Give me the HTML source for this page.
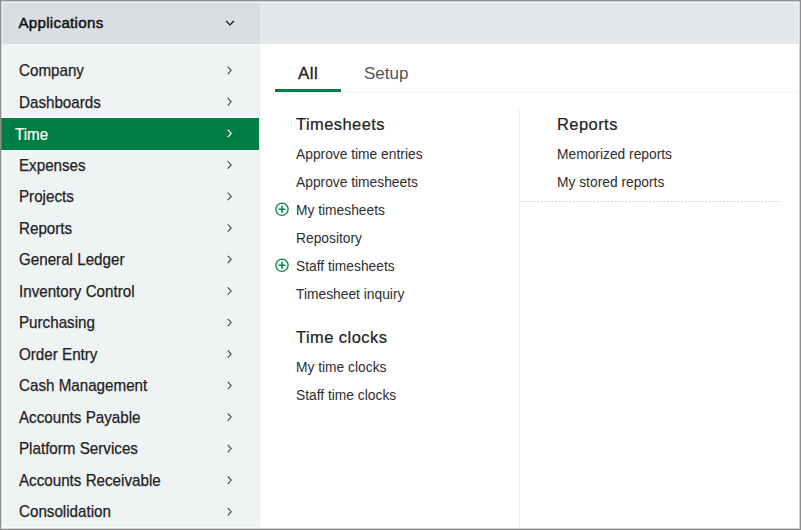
<!DOCTYPE html>
<html>
<head>
<meta charset="utf-8">
<style>
html,body{margin:0;padding:0;width:801px;height:530px;overflow:hidden;background:#fff;}
body{position:relative;font-family:"Liberation Sans",sans-serif;}
.a{position:absolute;white-space:nowrap;}
#frame{position:absolute;left:0;top:0;width:801px;height:530px;box-sizing:border-box;border:1px solid #8e8e8e;}
#frame2{position:absolute;left:1px;top:1px;width:799px;height:528px;box-sizing:border-box;border:1px solid rgba(142,142,142,0.4);}
#hdrL{position:absolute;left:2px;top:2px;width:258px;height:42px;box-sizing:border-box;border-top:1px solid #e9eef0;border-left:1px solid #e9eef0;background:#d8dee1;}
#hdrR{position:absolute;left:260px;top:2px;width:539px;height:42px;box-sizing:border-box;border-top:1px solid #eff2f4;border-right:1px solid #eff2f4;background:#e4e8eb;}
#side{position:absolute;left:2px;top:44px;width:258px;height:484px;box-sizing:border-box;border-left:1px solid #fbfcfc;border-bottom:1px solid #fbfcfc;border-right:1px solid #e8eced;background:#eff3f4;}
.row{position:absolute;left:0px;width:256px;height:31.5px;line-height:31.5px;font-size:15.2px;color:#222;}
.row span{position:absolute;left:15.5px;top:0px;-webkit-text-stroke:0.25px currentColor;font-size:15.9px;transform:scaleX(0.955);transform-origin:0 50%;}
.row.sel{background:#007d44;color:#fff;box-shadow:0 -1px 0 #fafcfc,0 1px 0 #fafcfc;}
.row.sel span{left:14px;top:0.6px;-webkit-text-stroke:0.2px #fff;}
.chev{position:absolute;left:223px;top:11px;width:8px;height:8px;}
.tab{font-size:17px;line-height:17px;}
.h{font-size:15.9px;line-height:16px;color:#222;letter-spacing:0.45px;transform:scaleX(1.035);transform-origin:0 0;-webkit-text-stroke:0.2px #222;}
.it{font-size:13.8px;line-height:14px;color:#2e2e2e;}
</style>
</head>
<body>
<div id="hdrL"></div>
<div id="hdrR"></div>
<div class="a" style="left:18.4px;top:13.7px;font-size:15.2px;line-height:18px;letter-spacing:0.27px;color:#111;-webkit-text-stroke:0.45px #111;">Applications</div>
<svg class="a" style="left:224px;top:18px" width="12" height="10" viewBox="0 0 12 10"><path d="M2.1 3.1 L6 6.9 L9.9 3.1" fill="none" stroke="#1a1a1a" stroke-width="1.35"/></svg>

<div id="side">
  <div class="row" style="top:11px"><span>Company</span></div>
  <div class="row" style="top:42.5px"><span>Dashboards</span></div>
  <div class="row sel" style="top:74px;left:-2px;width:258px"><span>Time</span></div>
  <div class="row" style="top:105.5px"><span>Expenses</span></div>
  <div class="row" style="top:137px"><span>Projects</span></div>
  <div class="row" style="top:168.5px"><span>Reports</span></div>
  <div class="row" style="top:200px"><span>General Ledger</span></div>
  <div class="row" style="top:231.5px"><span>Inventory Control</span></div>
  <div class="row" style="top:263px"><span>Purchasing</span></div>
  <div class="row" style="top:294.5px"><span>Order Entry</span></div>
  <div class="row" style="top:326px"><span>Cash Management</span></div>
  <div class="row" style="top:357.5px"><span>Accounts Payable</span></div>
  <div class="row" style="top:389px"><span>Platform Services</span></div>
  <div class="row" style="top:420.5px"><span>Accounts Receivable</span></div>
  <div class="row" style="top:452px"><span>Consolidation</span></div>
</div>
<svg class="a" style="left:0;top:0" width="260" height="530" viewBox="0 0 260 530"><path d="M227.70 66.65 L231.20 70.35 L227.70 74.05" fill="none" stroke="#404040" stroke-width="1.05"/><path d="M227.70 98.17 L231.20 101.87 L227.70 105.57" fill="none" stroke="#404040" stroke-width="1.05"/><path d="M227.70 129.69 L231.20 133.39 L227.70 137.09" fill="none" stroke="#fff" stroke-width="1.2"/><path d="M227.70 161.21 L231.20 164.91 L227.70 168.61" fill="none" stroke="#404040" stroke-width="1.05"/><path d="M227.70 192.73 L231.20 196.43 L227.70 200.13" fill="none" stroke="#404040" stroke-width="1.05"/><path d="M227.70 224.25 L231.20 227.95 L227.70 231.65" fill="none" stroke="#404040" stroke-width="1.05"/><path d="M227.70 255.77 L231.20 259.47 L227.70 263.17" fill="none" stroke="#404040" stroke-width="1.05"/><path d="M227.70 287.29 L231.20 290.99 L227.70 294.69" fill="none" stroke="#404040" stroke-width="1.05"/><path d="M227.70 318.81 L231.20 322.51 L227.70 326.21" fill="none" stroke="#404040" stroke-width="1.05"/><path d="M227.70 350.33 L231.20 354.03 L227.70 357.73" fill="none" stroke="#404040" stroke-width="1.05"/><path d="M227.70 381.85 L231.20 385.55 L227.70 389.25" fill="none" stroke="#404040" stroke-width="1.05"/><path d="M227.70 413.37 L231.20 417.07 L227.70 420.77" fill="none" stroke="#404040" stroke-width="1.05"/><path d="M227.70 444.89 L231.20 448.59 L227.70 452.29" fill="none" stroke="#404040" stroke-width="1.05"/><path d="M227.70 476.41 L231.20 480.11 L227.70 483.81" fill="none" stroke="#404040" stroke-width="1.05"/><path d="M227.70 507.93 L231.20 511.63 L227.70 515.33" fill="none" stroke="#404040" stroke-width="1.05"/></svg>

<!-- tabs -->
<div class="a tab" style="left:298px;top:64.5px;color:#222;letter-spacing:0.5px;-webkit-text-stroke:0.3px #222;">All</div>
<div class="a tab" style="left:364px;top:64.5px;color:#555;">Setup</div>
<div class="a" style="left:275px;top:91.5px;width:523px;height:1.5px;background:#f3f3f3;"></div>
<div class="a" style="left:275px;top:89px;width:66px;height:3px;background:#007e45;"></div>

<!-- divider -->
<div class="a" style="left:478px;top:106px;width:41.5px;height:430px;border-right:1.5px solid #f0f0f0;border-top:1.5px solid transparent;border-top-right-radius:7px;box-sizing:border-box;"></div>
<svg class="a" style="left:520px;top:201px" width="261" height="1"><line x1="0" y1="0.5" x2="260" y2="0.5" stroke="#d6d6d6" stroke-width="1" stroke-dasharray="2 1.5"/></svg>

<!-- left column -->
<div class="a h" style="left:296px;top:117px;">Timesheets</div>
<div class="a it" style="left:296px;top:148px;">Approve time entries</div>
<div class="a it" style="left:296px;top:176px;">Approve timesheets</div>
<svg class="a" style="left:274px;top:201px" width="16" height="17" viewBox="0 0 16 17"><circle cx="8" cy="8.3" r="6.1" fill="none" stroke="#0b874b" stroke-width="1.3"/><path d="M4.5 8.3 H11.5 M8 4.8 V11.8" stroke="#0b874b" stroke-width="1.6"/></svg>
<div class="a it" style="left:296px;top:204px;">My timesheets</div>
<div class="a it" style="left:296px;top:232px;">Repository</div>
<svg class="a" style="left:274px;top:257px" width="16" height="17" viewBox="0 0 16 17"><circle cx="8" cy="8.3" r="6.1" fill="none" stroke="#0b874b" stroke-width="1.3"/><path d="M4.5 8.3 H11.5 M8 4.8 V11.8" stroke="#0b874b" stroke-width="1.6"/></svg>
<div class="a it" style="left:296px;top:260px;">Staff timesheets</div>
<div class="a it" style="left:296px;top:288px;">Timesheet inquiry</div>

<div class="a h" style="left:296px;top:330px;">Time clocks</div>
<div class="a it" style="left:296px;top:361px;">My time clocks</div>
<div class="a it" style="left:296px;top:389px;">Staff time clocks</div>

<!-- right column -->
<div class="a h" style="left:557px;top:117px;">Reports</div>
<div class="a it" style="left:557px;top:148px;">Memorized reports</div>
<div class="a it" style="left:557px;top:176px;">My stored reports</div>

<div id="frame"></div><div id="frame2"></div>
</body>
</html>
